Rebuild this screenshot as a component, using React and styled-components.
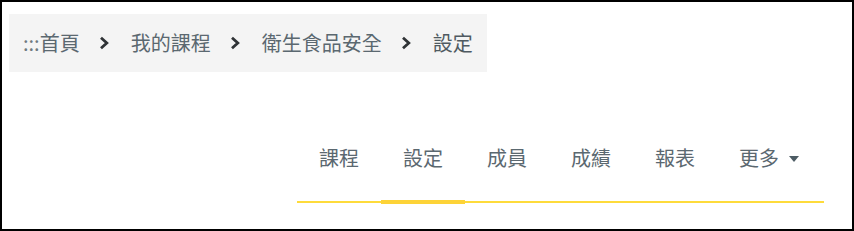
import React from "react";
import styled, { createGlobalStyle } from "styled-components";

const GlobalStyle = createGlobalStyle`
    html, body {
        margin: 0;
        padding: 0;
        background: #ffffff;
    }
    body {
        font-family: "Noto Sans CJK TC", "Noto Sans", sans-serif;
    }
`;

const Frame = styled.div`
    box-sizing: border-box;
    width: 854px;
    height: 231px;
    border: 2px solid #000;
    padding: 12px 0 0 7px;
    overflow: hidden;
`;

const Breadcrumb = styled.nav`
    display: inline-flex;
    align-items: center;
    height: 58px;
    padding: 0 14px;
    background: #f4f4f4;
    font-size: 20px;
    line-height: 28px;
`;

const Crumb = styled.a`
    color: ${(props) => (props.current ? "#4f5a61" : "#5b6870")};
    text-decoration: none;
    white-space: nowrap;
`;

const Access = styled.span`
    color: #6f7a80;
`;

const Separator = styled.span`
    display: inline-flex;
    align-items: center;
    margin: 0 21px 0 19px;
    color: #2f3336;
`;

const TabBar = styled.div`
    display: flex;
    margin: 72px 0 0 288px;
    width: 527px;
    border-bottom: 2px solid #fedb3b;
`;

const Tab = styled.a`
    position: relative;
    display: flex;
    align-items: center;
    padding: 0 22px 29px;
    font-size: 20px;
    line-height: 28px;
    color: #5b6870;
    text-decoration: none;
    white-space: nowrap;

    ${(props) =>
        props.active &&
        `
        &::after {
            content: "";
            position: absolute;
            left: 0;
            right: 0;
            bottom: -3px;
            height: 4px;
            background: #fdd337;
        }
    `}
`;

const Caret = styled.span`
    display: inline-block;
    margin-left: 10px;
    width: 0;
    height: 0;
    border-left: 5.5px solid transparent;
    border-right: 5.5px solid transparent;
    border-top: 6px solid #4d5c64;
    transform: translateY(1px);
`;

const Chevron = () => (
    <svg width="11" height="14" viewBox="0 0 11 14">
        <path d="M2 1.8 L7.8 7 L2 12.2" fill="none" stroke="currentColor" strokeWidth="2.8" />
    </svg>
);

const crumbs = ["我的課程", "衛生食品安全"];
const tabs = ["課程", "設定", "成員", "成績", "報表"];

const App = () => {
    return (
        <Frame>
            <GlobalStyle />
            <Breadcrumb>
                <Crumb href="#">
                    <Access>:::</Access>首頁
                </Crumb>
                {crumbs.map((c) => (
                    <React.Fragment key={c}>
                        <Separator>
                            <Chevron />
                        </Separator>
                        <Crumb href="#">{c}</Crumb>
                    </React.Fragment>
                ))}
                <Separator>
                    <Chevron />
                </Separator>
                <Crumb current>設定</Crumb>
            </Breadcrumb>
            <TabBar>
                {tabs.map((t) => (
                    <Tab key={t} href="#" active={t === "設定"}>
                        {t}
                    </Tab>
                ))}
                <Tab href="#">
                    更多
                    <Caret />
                </Tab>
            </TabBar>
        </Frame>
    );
};

export default App;
